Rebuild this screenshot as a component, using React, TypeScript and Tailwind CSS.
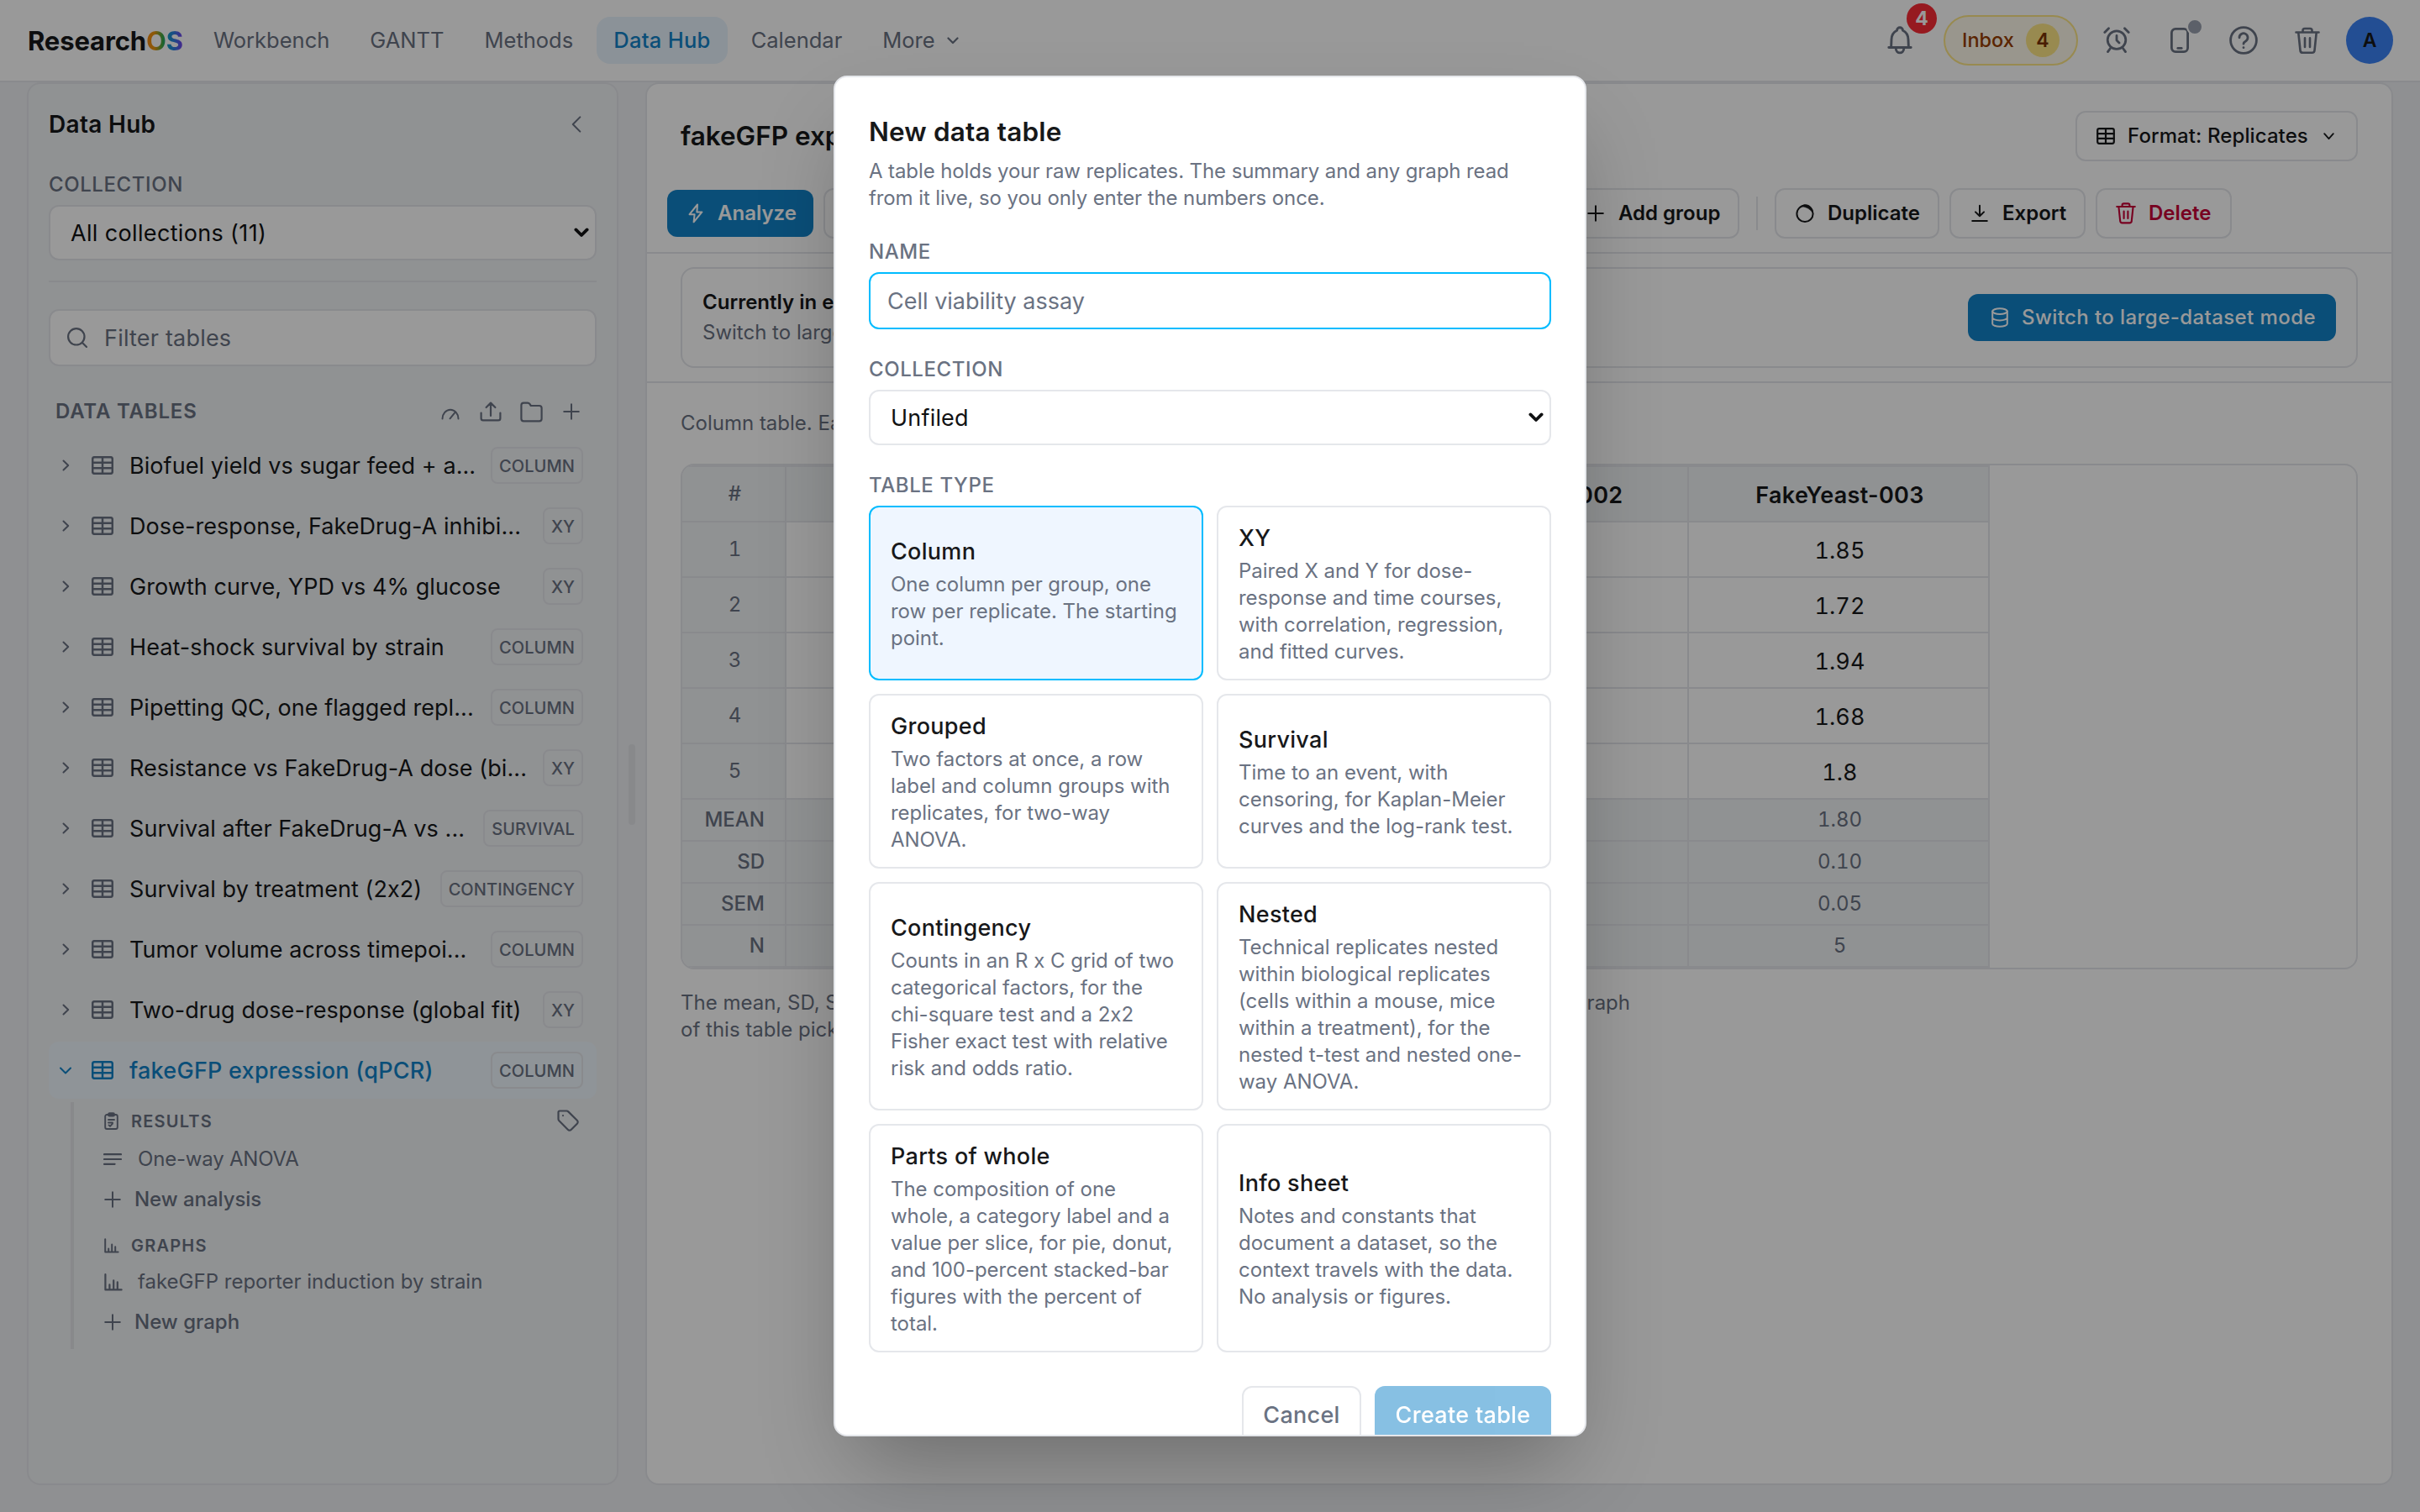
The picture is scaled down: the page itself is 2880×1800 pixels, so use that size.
import type { ReactNode } from "react";

function Svg({ w, h, d, className = "", sw = 2, children }: { w: number; h: number; d?: string; className?: string; sw?: number; children?: ReactNode }) {
  return (
    <svg width={w} height={h} viewBox={`0 0 ${w} ${h}`} fill="none" stroke="currentColor" strokeWidth={sw} strokeLinecap="round" strokeLinejoin="round" className={`shrink-0 ${className}`}>
      {d && <path d={d} />}
      {children}
    </svg>
  );
}

const TableIcon = ({ small = false }: { small?: boolean }) =>
  small ? (
    <Svg w={22} h={20} sw={2.2} d="M1.2 7.2H20.8M1.2 12.8H20.8M11 1.2V18.8">
      <rect x="1.2" y="1.2" width="19.6" height="17.6" rx="2" />
    </Svg>
  ) : (
    <Svg w={26} h={22} sw={2.5} d="M1.2 7.8H24.8M1.2 14.2H24.8M13 1.2V20.8">
      <rect x="1.2" y="1.2" width="23.6" height="19.6" rx="2.2" />
    </Svg>
  );
const Plus = () => <Svg w={20} h={20} d="M10 1.2V18.8M1.2 10H18.8" />;
const Trash = ({ big = false }: { big?: boolean }) => (
  <svg viewBox="0 0 24 26" fill="none" stroke="currentColor" strokeWidth="2.1" strokeLinecap="round" strokeLinejoin="round" className={big ? "h-[33px] w-[30px]" : "h-[26px] w-6"}>
    <path d="M1.2 5H22.8M7.6 5V3.2a1.8 1.8 0 0 1 1.8-1.8h5.2a1.8 1.8 0 0 1 1.8 1.8V5M3.4 5l1.8 17.2a2.4 2.4 0 0 0 2.4 2.2h8.8a2.4 2.4 0 0 0 2.4-2.2L20.6 5M9.6 10.5v8.5M14.4 10.5v8.5" />
  </svg>
);
const SelectArrow = () => <Svg w={18} h={12} sw={3.8} d="M2.4 2.4 9 9 15.6 2.4" className="text-[#111213]" />;

function Header() {
  return (
    <header className="flex h-[98px] shrink-0 items-start border-b-2 border-gray-200 bg-white pl-[33px] pr-8">
      <div className="flex h-24 w-[184px] items-center">
        <div className="whitespace-nowrap pt-0.5 text-[31px] font-bold leading-10 tracking-[-0.12px] text-[#17181a]">
          Research
          <span className="bg-[linear-gradient(90deg,#f78b14_0%,#ea940c_22%,#2fa84a_46%,#0e9cc4_58%,#2f7fe0_75%,#7c3aed_100%)] bg-clip-text text-transparent">OS</span>
        </div>
      </div>
      <nav className="ml-[17px] flex h-24 items-center gap-2 text-[25.5px] leading-10 text-gray-500">
        <span className="px-5">Workbench</span>
        <span className="px-5">GANTT</span>
        <span className="px-5">Methods</span>
        <span className="flex h-14 items-center rounded-[16px] bg-[#e8f4fd] px-5 font-medium tracking-[0.3px] text-[#1283c9]">Data Hub</span>
        <span className="px-5">Calendar</span>
        <span className="flex items-center gap-[14px] px-5">
          More
          <Svg w={14} h={9} sw={2.2} d="M1.5 1.5 7 7 12.5 1.5" />
        </span>
      </nav>
      <div className="ml-auto flex h-24 items-center text-gray-500">
        <div className="relative mr-[37px] h-[34px] w-[30px]">
          <Svg w={30} h={34} sw={2.9} d="M11.5 5.3a3.5 3.5 0 0 1 7 0C22.8 7.3 24.8 11 25 16L25.4 25.5M11.5 5.3C7.2 7.3 5.2 11 5 16L4.6 25.5M1.8 25.5H28.2M10.3 27a4.7 4.9 0 0 0 9.4 0" />
          <span className="absolute -top-[27px] left-[23px] flex size-9 items-center justify-center rounded-full bg-red-500 text-[23px] font-bold text-white">4</span>
        </div>
        <div className="mr-[30px] flex h-[60px] w-40 items-center justify-between rounded-full border-2 border-amber-200 bg-amber-50 pl-[20px] pr-5 text-[23.5px] font-medium text-amber-800">
          <span>Inbox</span>
          <span className="flex size-10 items-center justify-center rounded-full bg-amber-200 text-[23px] font-semibold text-amber-900">4</span>
        </div>
        <Svg w={32} h={32} sw={2.8} className="mr-[48px]" d="M16 10.5V16L19 19M1.8 6.5 6.5 1.8M25.5 1.8 30.2 6.5M8.5 25.5 5.5 29.6M23.5 25.5 26.5 29.6">
          <circle cx="16" cy="15.6" r="10.8" />
        </Svg>
        <div className="relative mr-[48px] h-[30px] w-[22px]">
          <Svg w={22} h={30} sw={2.8} d="M8.8 24.4H13.2">
            <rect x="1.4" y="1.4" width="19.2" height="27.2" rx="4.6" />
          </Svg>
          <span className="absolute -top-[11px] left-[19px] size-[20px] rounded-full border-2 border-white bg-gray-400" />
        </div>
        <Svg w={34} h={34} sw={2.8} className="mr-[44px]" d="M12 13.8a5 5 0 1 1 7.6 4.2c-1.8 1-2.6 1.7-2.6 3.2M17 25.6v.1">
          <circle cx="17" cy="17" r="15.4" />
        </Svg>
        <div className="mr-[31px] flex"><Trash big /></div>
        <span className="flex size-14 items-center justify-center rounded-full bg-[#3b82f6] text-[23px] font-semibold text-[#17181a]">A</span>
      </div>
    </header>
  );
}

const tables: [string, string][] = [
  ["Biofuel yield vs sugar feed + a...", "COLUMN"],
  ["Dose-response, FakeDrug-A inhibi...", "XY"],
  ["Growth curve, YPD vs 4% glucose", "XY"],
  ["Heat-shock survival by strain", "COLUMN"],
  ["Pipetting QC, one flagged repl...", "COLUMN"],
  ["Resistance vs FakeDrug-A dose (bi...", "XY"],
  ["Survival after FakeDrug-A vs ...", "SURVIVAL"],
  ["Survival by treatment (2x2)", "CONTINGENCY"],
  ["Tumor volume across timepoi...", "COLUMN"],
  ["Two-drug dose-response (global fit)", "XY"],
  ["fakeGFP expression (qPCR)", "COLUMN"],
];

function TableRow({ name, kind, active }: { name: string; kind: string; active: boolean }) {
  return (
    <div className={`flex h-[68px] items-center rounded-[12px] pl-3 pr-4 ${active ? "bg-[#eef7fd] text-[#1283c9]" : "text-[#17181a]"}`}>
      <span className={`flex w-4 justify-center ${active ? "" : "text-gray-500"}`}>
        {active ? <Svg w={14} h={9} d="M1 1.5 7 7.5 13 1.5" /> : <Svg w={9} h={14} d="M1.5 1.5 7.2 7 1.5 12.5" />}
      </span>
      <span className={`ml-[23px] mr-[19px] ${active ? "" : "text-gray-500"}`}><TableIcon /></span>
      <span className={`flex-1 whitespace-nowrap pt-0.5 text-[27px] leading-10 ${active ? "font-medium tracking-[0.25px]" : "tracking-[0.07px]"}`}>{name}</span>
      <span className="flex h-11 items-center rounded-[8px] border-2 border-gray-200 px-2 pt-0.5 text-[20px] font-medium tracking-[0.08px] text-gray-500">{kind}</span>
    </div>
  );
}

const ChartSmall = () => <Svg w={18} h={18} d="M1.2 1.2V16.6H16.6M5.2 16.4V12.4M9.2 16.4V7.6M13.2 16.4V10.2" />;
const ChartIcon = () => <Svg w={22} h={21} d="M1.4 1.2V19.4H20.6M6.4 19.4V13.4M11.2 19.4V8.4M15.8 19.4V10.4" sw={2.2} />;

function Sidebar() {
  return (
    <aside className="flex w-[704px] shrink-0 flex-col rounded-[16px] border-2 border-gray-200 bg-[#f1f3f6] px-6">
      <div className="mt-[26px] flex h-11 items-center justify-between pr-[18px]">
        <h2 className="text-[28px] font-semibold leading-10 tracking-[0.3px] text-[#17181a]">Data Hub</h2>
        <Svg w={12} h={20} d="M10.3 1.4 1.8 10 10.3 18.6" className="text-gray-500" />
      </div>
      <div className="mt-[34px] text-[24px] font-medium leading-8 tracking-[0.6px] text-gray-500">COLLECTION</div>
      <div className="mt-2 flex h-[66px] items-center justify-between rounded-[12px] border-2 border-gray-200 bg-white pl-6 pr-[7px] text-[27px] text-[#111213]">
        <span className="pt-[3px] tracking-[0.35px]">All collections (11)</span>
        <SelectArrow />
      </div>
      <div className="mt-6 border-t-2 border-gray-200" />
      <div className="mt-8 flex h-[68px] items-center gap-[20px] rounded-[12px] border-2 border-gray-200 bg-white pl-[20px] text-[27px] text-gray-500">
        <Svg w={24} h={24} sw={2.2} d="M18 18 23 23">
          <circle cx="10.8" cy="10.8" r="9.7" />
        </Svg>
        <span className="pt-[3px] tracking-[0.2px]">Filter tables</span>
      </div>
      <div className="mt-9 flex h-9 items-center justify-between pl-2 pr-[20px] text-gray-500">
        <span className="text-[24px] font-semibold leading-8 tracking-[0.8px]">DATA TABLES</span>
        <div className="flex items-center gap-[24px]">
          <Svg w={22} h={14} d="M1.5 12.5A9.5 10.8 0 0 1 20.5 12.5M10.5 12.3 16 5.6" className="translate-y-[3px]" />
          <Svg w={26} h={24} sw={2.2} d="M1.6 13.5V20a2.4 2.4 0 0 0 2.4 2.4H22a2.4 2.4 0 0 0 2.4-2.4V13.5M13 17V1.6M7.6 7 13 1.6 18.4 7" className="-mr-0.5" />
          <Svg w={27} h={25} sw={2.2} d="M1.4 20.5V4.4A2.8 2.8 0 0 1 4.2 1.6H9a2.8 2.8 0 0 1 2.2 1.1L12.8 5H22.8A2.8 2.8 0 0 1 25.6 7.8V20.5A2.8 2.8 0 0 1 22.8 23.3H4.2A2.8 2.8 0 0 1 1.4 20.5Z" />
          <Plus />
        </div>
      </div>
      <div className="mt-3 flex flex-col gap-1">
        {tables.map(([name, kind]) => (
          <TableRow key={name} name={name} kind={kind} active={name === "fakeGFP expression (qPCR)"} />
        ))}
      </div>
      <div className="ml-[26px] mt-1 h-[294px] border-l-4 border-[#e3e5e8] pl-9 text-gray-500">
        <div className="flex h-11 items-center pr-[20px]">
          <Svg w={17} h={21} sw={1.9} d="M5 3H3.2A2 2 0 0 0 1.2 5V18A2 2 0 0 0 3.2 20H13.8A2 2 0 0 0 15.8 18V5A2 2 0 0 0 13.8 3H12M5 9H12M5 12.5H10M5.5 15.4 7 16.8 10 13.6">
            <rect x="5" y="1.2" width="7" height="3.4" rx="1.2" fill="currentColor" />
          </Svg>
          <span className="ml-[15px] flex-1 pt-0.5 text-[20px] font-semibold leading-8 tracking-[1.2px]">RESULTS</span>
          <Svg w={27} h={27} sw={2.2} d="M1.5 3V11.2a3 3 0 0 0 .9 2.1L12.8 23.8a2.8 2.8 0 0 0 4 0l7-7a2.8 2.8 0 0 0 0-4L13.3 2.4a3 3 0 0 0-2.1-.9H3A1.5 1.5 0 0 0 1.5 3ZM7 7v.1" />
        </div>
        <div className="flex h-12 items-center text-[24px] leading-8">
          <Svg w={22} h={14} sw={2.2} d="M1 1.2H21M1 7H21M1 12.8H13.6" className="-ml-px mr-px" />
          <span className="ml-[18px] tracking-[-0.2px]">One-way ANOVA</span>
        </div>
        <div className="flex h-12 items-center text-[24px] font-medium leading-8">
          <Plus />
          <span className="ml-[16px] tracking-[-0.05px]">New analysis</span>
        </div>
        <div className="mt-[13px] flex h-9 items-center">
          <ChartSmall />
          <span className="ml-[14px] text-[20px] font-semibold leading-8 tracking-[1.2px]">GRAPHS</span>
        </div>
        <div className="mt-px flex h-12 items-center text-[24px] leading-8">
          <ChartIcon />
          <span className="ml-[18px]">fakeGFP reporter induction by strain</span>
        </div>
        <div className="flex h-12 items-center text-[24px] font-medium leading-8">
          <Plus />
          <span className="ml-[16px]">New graph</span>
        </div>
      </div>
    </aside>
  );
}

const values = ["1.85", "1.72", "1.94", "1.68", "1.8"];
const stats: [string, string][] = [["MEAN", "1.80"], ["SD", "0.10"], ["SEM", "0.05"], ["N", "5"]];
const groups = ["FakeYeast-000", "FakeYeast-001", "FakeYeast-002", "FakeYeast-003"];

function DataGrid() {
  const head = "border-r-2 border-b-2 border-gray-200 bg-[#f1f3f6]";
  return (
    <div className="flex overflow-hidden rounded-[16px] border-2 border-gray-200">
      <table className="w-[1556px] table-fixed border-separate border-spacing-0 text-center tabular-nums">
        <thead>
          <tr className="h-[68px]">
            <th className={`${head} w-[124px] border-t-2 pl-[3px] text-[24px] font-medium text-gray-500`}>#</th>
            {groups.map((g) => (
              <th key={g} className={`${head} border-t-2 pl-[3px] pt-[3px] text-[27px] font-semibold proportional-nums tracking-[0.3px] text-[#17181a]`}>{g}</th>
            ))}
          </tr>
        </thead>
        <tbody>
          {values.map((v, i) => (
            <tr key={v} className="h-[66px]">
              <td className={`${head} pl-[3px] text-[24px] text-gray-500`}>{i + 1}</td>
              {groups.map((g) => (
                <td key={g} className="border-b-2 border-r-2 border-gray-200 pl-[3px] pt-[3px] text-[27px] text-[#17181a]">{v}</td>
              ))}
            </tr>
          ))}
          {stats.map(([label, v]) => (
            <tr key={label} className="h-[50px] text-[24px] text-gray-500">
              <td className={`${head} pr-[24px] text-right font-medium`}>{label}</td>
              {groups.map((g) => (
                <td key={g} className={`${head} pl-[3px]`}>{v}</td>
              ))}
            </tr>
          ))}
        </tbody>
      </table>
    </div>
  );
}

function ToolButton({ icon, label, className }: { icon?: ReactNode; label: string; className: string }) {
  return (
    <div className={`flex h-[60px] items-center rounded-[12px] border-2 border-gray-200 ${className}`}>
      {icon}
      <span>{label}</span>
    </div>
  );
}

function MainPanel() {
  return (
    <main className="flex w-[2080px] shrink-0 flex-col rounded-[16px] border-2 border-gray-200 bg-white">
      <div className="mt-8 flex h-[60px] items-center justify-between px-10">
        <h1 className="text-[31.5px] font-semibold text-[#17181a]">fakeGFP expression (qPCR)</h1>
        <div className="flex h-[60px] w-[336px] items-center rounded-[12px] border-2 border-gray-200 pl-[23px] text-[24px] font-medium tracking-[0.1px] text-[#17181a]">
          <TableIcon small />
          <span className="ml-[15px] flex-1">Format: Replicates</span>
          <Svg w={13} h={9} sw={1.8} d="M1.2 1.2 6.5 7.2 11.8 1.2" className="mr-[26px]" />
        </div>
      </div>
      <div className="mt-8 flex h-[60px] items-center px-6 text-[24px] font-semibold text-[#17181a]">
        <div className="flex h-14 w-[174px] items-center rounded-[12px] bg-[#1283c9] pl-[25px] text-white">
          <Svg w={18} h={24} d="M11 1.5 1.6 13.2H7.6L6.6 22.3 16.4 10.4H10.4Z" />
          <span className="ml-[17px]">Analyze</span>
        </div>
        <ToolButton className="ml-3 w-[872px] pl-6" label="Transform" />
        <ToolButton className="ml-3 w-[206px] gap-[17px] pl-[23px]" icon={<Plus />} label="Add group" />
        <div className="ml-5 h-10 w-0.5 bg-gray-200" />
        <ToolButton
          className="ml-5 w-[196px] gap-[16px] pl-[23px]"
          icon={
            <Svg w={22} h={22}>
              <circle cx="11" cy="11.4" r="9.6" />
              <path d="M6.5 2.6C9.5-.6 16 .1 18.8 4.6 20.2 6.6 20.6 8.4 20.6 10.6 18 7.4 14.6 3.4 6.5 2.6Z" fill="currentColor" strokeWidth="0.6" />
            </Svg>
          }
          label="Duplicate"
        />
        <ToolButton className="ml-3 w-[162px] gap-[17px] pl-[24px]" icon={<Svg w={20} h={22} d="M10 1.8V14M5 9.4 10 14.2 15 9.4M1.2 20H18.8" />} label="Export" />
        <ToolButton className="ml-3 w-[162px] gap-[15px] pl-[22px] text-rose-700" icon={<Trash />} label="Delete" />
      </div>
      <div className="mt-4 border-y-2 border-gray-200 px-10 py-4">
        <div className="flex h-[120px] items-center justify-between rounded-[16px] border-2 border-gray-200 px-6 text-[24px] leading-9">
          <div>
            <div className="font-semibold text-[#17181a]">Currently in editable mode</div>
            <div className="text-gray-500">Switch to large-dataset mode</div>
          </div>
          <div className="flex h-14 w-[438px] items-center rounded-[12px] bg-[#1283c9] pl-[28px] font-medium tracking-[0.42px] text-white">
            <Svg w={20} h={24} d="M1.2 4.6V19.4C1.2 21.2 5 22.8 10 22.8S18.8 21.2 18.8 19.4V4.6M1.2 12C1.2 13.8 5 15.4 10 15.4S18.8 13.8 18.8 12">
              <ellipse cx="10" cy="4.6" rx="8.8" ry="3.4" />
            </Svg>
            <span className="ml-4">Switch to large-dataset mode</span>
          </div>
        </div>
      </div>
      <div className="px-10 text-[24px] leading-8 text-gray-500">
        <p className="mb-8 mt-8">Column table. Each column is a group</p>
        <DataGrid />
        <div className="mt-6 w-[1130px]">
          <div className="flex justify-between">
            <span>The mean, SD, SEM, and N update as you edit, and every linked</span>
            <span>graph</span>
          </div>
          <div>of this table picks up the change.</div>
        </div>
      </div>
    </main>
  );
}

const types: [string, string[]][] = [
  ["Column", ["One column per group, one", "row per replicate. The starting", "point."]],
  ["XY", ["Paired X and Y for dose-", "response and time courses,", "with correlation, regression,", "and fitted curves."]],
  ["Grouped", ["Two factors at once, a row", "label and column groups with", "replicates, for two-way", "ANOVA."]],
  ["Survival", ["Time to an event, with", "censoring, for Kaplan-Meier", "curves and the log-rank test."]],
  ["Contingency", ["Counts in an R x C grid of two", "categorical factors, for the", "chi-square test and a 2x2", "Fisher exact test with relative", "risk and odds ratio."]],
  ["Nested", ["Technical replicates nested", "within biological replicates", "(cells within a mouse, mice", "within a treatment), for the", "nested t-test and nested one-", "way ANOVA."]],
  ["Parts of whole", ["The composition of one", "whole, a category label and a", "value per slice, for pie, donut,", "and 100-percent stacked-bar", "figures with the percent of", "total."]],
  ["Info sheet", ["Notes and constants that", "document a dataset, so the", "context travels with the data.", "No analysis or figures."]],
];

function Dialog() {
  return (
    <div className="h-[1620px] w-[896px] overflow-hidden rounded-[16px] border-2 border-gray-200 bg-white px-10 pt-10 shadow-[0_50px_100px_-24px_rgba(0,0,0,0.3)]">
      <h2 className="pt-px text-[31.5px] font-semibold leading-[47px] tracking-[0.15px] text-[#17181a]">New data table</h2>
      <p className="mt-2 whitespace-nowrap text-[24px] leading-8 tracking-[-0.1px] text-gray-500">
        A table holds your raw replicates. The summary and any graph read
        <br />
        from it live, so you only enter the numbers once.
      </p>
      <div className="mt-8 text-[24px] font-medium leading-8 tracking-[0.6px] text-gray-500">NAME</div>
      <div className="mt-2 flex h-[68px] items-center rounded-[12px] border-2 border-sky-400 px-5 pt-0.5 text-[27px] text-gray-500">Cell viability assay</div>
      <div className="mt-8 text-[24px] font-medium leading-8 tracking-[0.6px] text-gray-500">COLLECTION</div>
      <div className="mt-2 flex h-[66px] items-center justify-between rounded-[12px] border-2 border-gray-200 pl-6 pr-[7px] text-[27px] text-[#111213]">
        <span className="pt-[3px] tracking-[0.2px]">Unfiled</span>
        <SelectArrow />
      </div>
      <div className="mt-8 text-[24px] font-medium leading-8 tracking-[0.6px] text-gray-500">TABLE TYPE</div>
      <div className="mt-2 grid grid-cols-2 gap-4">
        {types.map(([title, lines], i) => (
          <div key={title} className={`flex flex-col justify-center rounded-[12px] border-2 px-6 py-4 ${i === 0 ? "border-sky-400 bg-blue-50" : "border-gray-200"}`}>
            <div className="pt-0.5 text-[27px] font-medium leading-[38px] tracking-[0.3px] text-[#17181a]">{title}</div>
            <div className="mt-1 whitespace-pre text-[24px] leading-8 tracking-[-0.03px] text-gray-500">{lines.join("\n")}</div>
          </div>
        ))}
      </div>
      <div className="mt-10 flex justify-end gap-4 text-[27px] font-medium tracking-[0.3px]">
        <div className="flex h-[68px] w-[142px] items-center justify-center rounded-[12px] border-2 border-gray-200 pt-0.5 text-gray-500">Cancel</div>
        <div className="flex h-[68px] w-[210px] items-center justify-center rounded-[12px] bg-[#1283c9] pt-0.5 text-white opacity-50">Create table</div>
      </div>
    </div>
  );
}

export default function App() {
  return (
    <div className="relative flex h-[1800px] w-[2880px] flex-col overflow-hidden bg-[#eef0f4] font-[Inter,sans-serif]">
      <Header />
      <div className="flex h-[1670px] shrink-0 pl-8">
        <Sidebar />
        <div className="mx-3 mt-[788px] h-24 w-2 shrink-0 rounded-full bg-[#e3e5e8]" />
        <MainPanel />
      </div>
      <div className="absolute inset-0 flex items-center justify-center bg-black/40">
        <Dialog />
      </div>
    </div>
  );
}
